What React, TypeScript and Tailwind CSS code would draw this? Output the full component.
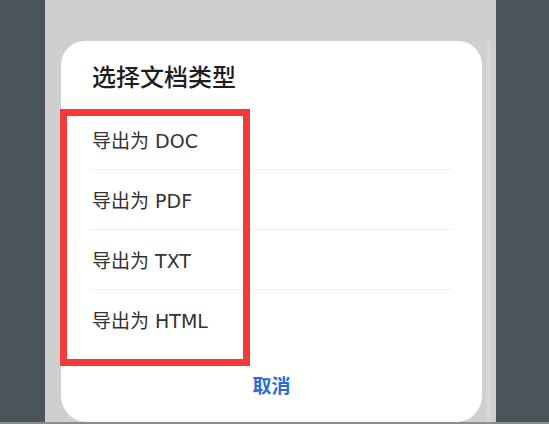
import React from "react";

const items = ["导出为 DOC", "导出为 PDF", "导出为 TXT", "导出为 HTML"];

export default function App() {
  return (
    <div
      className="relative w-[549px] h-[424px] overflow-hidden flex flex-col bg-[#4a545b]"
      style={{ fontFamily: '"Noto Sans", "Noto Sans CJK SC", sans-serif' }}
    >
      <div className="flex flex-1 min-h-0">
        <div className="w-[45px] bg-[#4a545b]" />
        <div className="w-[451px] bg-[#cfcfcf] pt-[41px] pl-[16px] pr-[15px] flex">
          <div className="flex-1 bg-white rounded-t-[24px] rounded-b-[26px] flex flex-col">
            <div className="pl-[31px] pt-[20px] h-[69px] text-[24px] leading-[32px] font-medium text-[#1e1e1e]">
              选择文档类型
            </div>
            <div className="mx-[29px] flex flex-col">
              {items.map((t, i) => (
                <div
                  key={t}
                  className={
                    "h-[60px] flex items-center pl-[2px] pt-[3px] text-[19px] text-[#333333] font-['DejaVu_Sans','Noto_Sans_CJK_SC',sans-serif] " +
                    (i < items.length - 1 ? "border-b border-[#efefef]" : "")
                  }
                >
                  {t}
                </div>
              ))}
            </div>
            <div className="flex-1 flex items-center justify-center text-[19px] font-semibold text-[#2b6bd6]">
              取消
            </div>
          </div>
          <div className="w-[5px] bg-[#d6d6d6] ml-[4px] -mr-[10px]" />
        </div>
        <div className="flex-1 bg-[#4a545b]" />
      </div>
      <div className="h-[2px] bg-[#8a8d90]" />
      <div className="absolute left-[60px] top-[109px] w-[190px] h-[257px] border-[7px] border-[#f23a3a]" />
    </div>
  );
}
